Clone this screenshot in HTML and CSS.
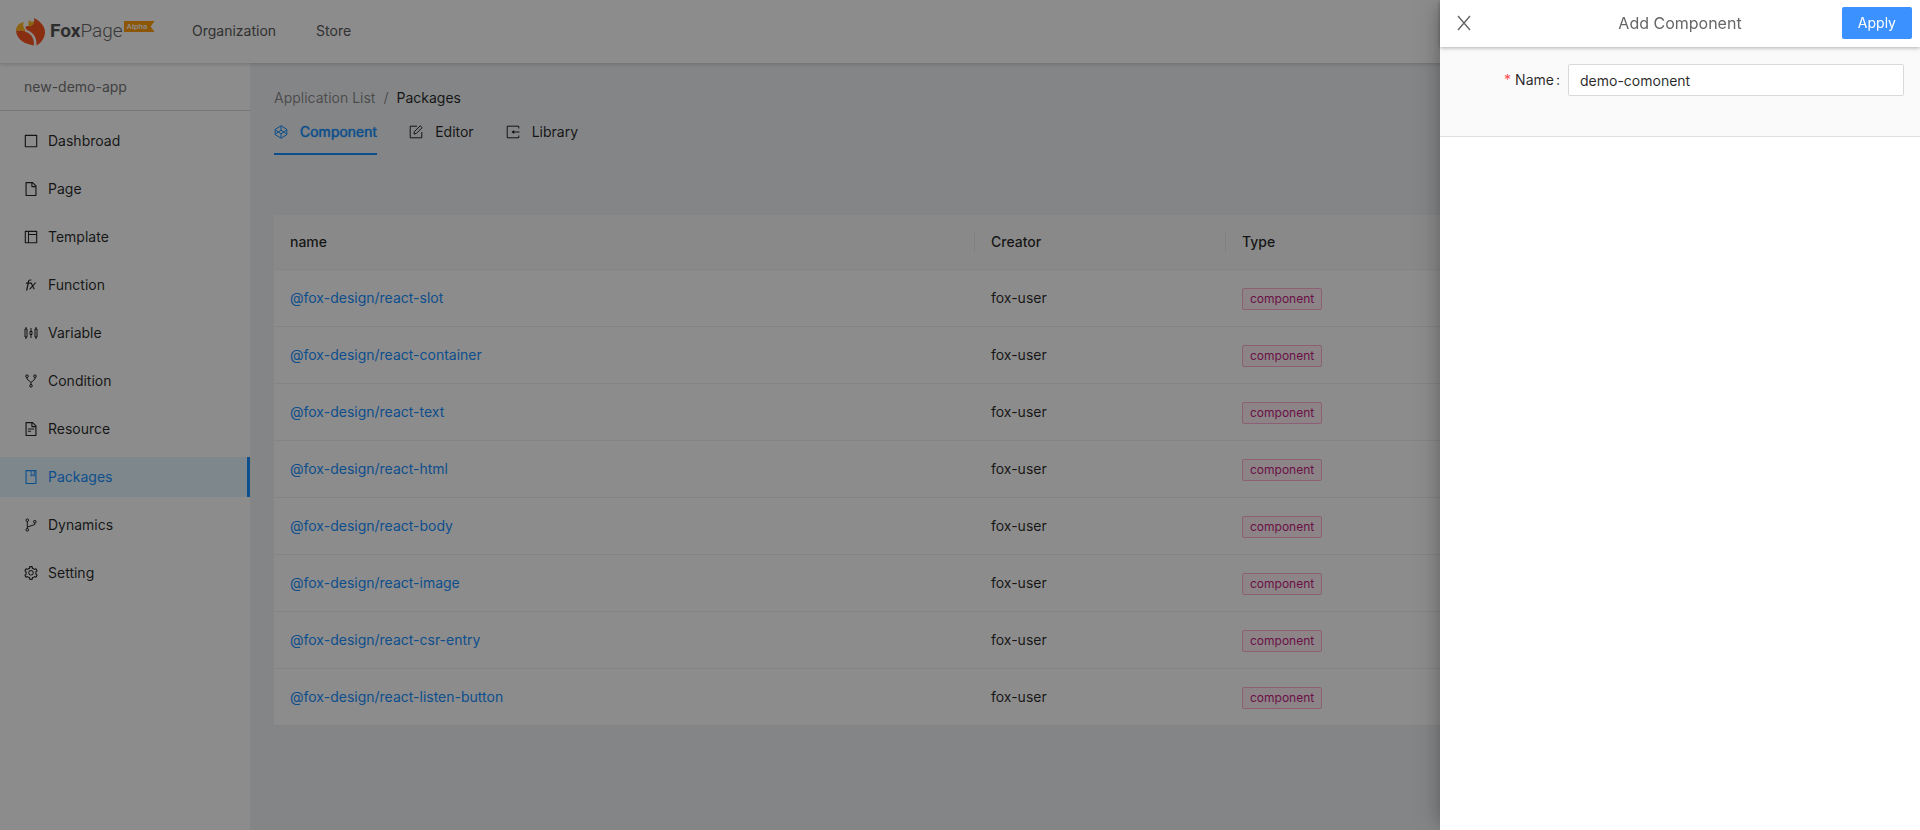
FILE: index.html
```html
<!DOCTYPE html>
<html lang="en">
<head>
<meta charset="utf-8">
<title>FoxPage - Packages</title>
<link rel="stylesheet" href="styles.css">
</head>
<body>
<div class="app">
  <header class="topbar">
    <a class="logo" href="#">
      <svg class="logo-mark" viewBox="0 0 29 28" aria-hidden="true">
        <path fill="#f9551f" d="M0 13c3-1 7-1 10 1 5 2 8 5 8 13.500C9 26 1 22 0 13z"/>
        <path fill="#f9551f" d="M18 0c6 3 11 8 11 14 0 6-4 11-8.500 13.500C21 19 17 15 13 13 9 11 8 8 12 8c4 0 7-3 6-8z"/>
        <path fill="#ffb41f" d="M8 4c-2 3 0 6 2 9.500C6 12 3 12.500 0 13 0 8 3 5 8 4zM13.500 1.500c.5 2.500 2.500 3 4.700 1.500.3 3-1.700 5-5.200 5.500-1-2-.7-5 .5-7z"/>
      </svg>
      <span class="logo-name"><b>Fox</b>Page</span>
      <span class="logo-tag">Alpha</span>
    </a>
    <nav class="topnav">
      <a href="#">Organization</a>
      <a href="#">Store</a>
    </nav>
  </header>
  <div class="body">
    <aside class="sidebar">
      <div class="app-name">new-demo-app</div>
      <nav class="menu">
        <a class="menu-item" href="#"><svg class="icon" viewBox="64 64 896 896"><path d="M880 112H144c-17.700 0-32 14.300-32 32v736c0 17.700 14.300 32 32 32h736c17.700 0 32-14.300 32-32V144c0-17.700-14.300-32-32-32zm-40 728H184V184h656v656z"/></svg>Dashbroad</a>
        <a class="menu-item" href="#"><svg class="icon" viewBox="64 64 896 896"><path d="M854.600 288.600L639.400 73.400c-6-6-14.100-9.400-22.600-9.400H192c-17.700 0-32 14.300-32 32v832c0 17.700 14.300 32 32 32h640c17.700 0 32-14.300 32-32V311.300c0-8.500-3.400-16.700-9.400-22.700zM790.200 326H602V137.800L790.200 326zm1.800 562H232V136h302v216a42 42 0 0042 42h216v494z"/></svg>Page</a>
        <a class="menu-item" href="#"><svg class="icon" viewBox="64 64 896 896"><path d="M880 112H144c-17.700 0-32 14.300-32 32v736c0 17.700 14.300 32 32 32h736c17.700 0 32-14.300 32-32V144c0-17.700-14.300-32-32-32zm-696 72h136v656H184V184zm656 656H384V384h456v456zM384 320V184h456v136H384z"/></svg>Template</a>
        <a class="menu-item" href="#"><svg class="icon" viewBox="64 64 896 896"><path d="M841 370c3-3.300 2.700-8.300-.6-11.300a8.240 8.240 0 00-5.300-2.100h-72.600c-2.400 0-4.600 1-6.100 2.800L633.500 504.600a7.960 7.960 0 01-13.400-1.900l-63.500-141.300a7.900 7.900 0 00-7.300-4.700H380.700l.9-4.700 8-42.300c10.500-55.400 38-81.400 85.800-81.400 18.600 0 35.500 1.700 48.800 4.700l14.100-66.800c-22.600-4.700-35.200-6.100-54.900-6.100-103.300 0-156.400 44.300-175.900 147.300l-9.400 49.400h-97.600c-3.800 0-7.100 2.700-7.800 6.400L181.900 415a8.070 8.070 0 007.800 9.700H284l-89 429.900a8.070 8.070 0 007.800 9.700H269c3.800 0 7.100-2.700 7.800-6.400l89.700-433.100h135.800l68.200 139.100c1.400 2.900 1 6.400-1.200 8.800l-180.600 203c-2.900 3.300-2.600 8.400.7 11.300 1.500 1.300 3.400 2 5.300 2h72.700c2.400 0 4.600-1 6.100-2.800l123.700-146.700c2.800-3.400 7.900-3.800 11.300-1 .9.800 1.600 1.700 2.100 2.800L676.400 784c1.300 2.800 4.100 4.700 7.300 4.700h64.600a8.020 8.020 0 007.200-11.500l-95.200-198.900c-1.400-2.900-.9-6.400 1.300-8.800L841 370z"/></svg>Function</a>
        <a class="menu-item" href="#"><svg class="icon icon-line" viewBox="0 0 14 14"><path d="M1 3h2v8H1zM2 1v2M2 11v2M7 2v3.500M7 8.500V12M6 5.500h2v3H6zM11 3h2v8h-2zM12 1v2M12 11v2"/></svg>Variable</a>
        <a class="menu-item" href="#"><svg class="icon icon-line" viewBox="0 0 14 14"><circle cx="3" cy="2.200" r="1.300"/><circle cx="11" cy="2.200" r="1.300"/><circle cx="7" cy="11.800" r="1.300"/><path d="M3 3.500V5l4 3.500L11 5V3.500M7 8.500v2"/></svg>Condition</a>
        <a class="menu-item" href="#"><svg class="icon" viewBox="64 64 896 896"><path d="M854.600 288.600L639.400 73.400c-6-6-14.100-9.400-22.600-9.400H192c-17.700 0-32 14.300-32 32v832c0 17.700 14.300 32 32 32h640c17.700 0 32-14.300 32-32V311.300c0-8.500-3.400-16.700-9.400-22.700zM790.200 326H602V137.800L790.200 326zm1.800 562H232V136h302v216a42 42 0 0042 42h216v494zM504 618H320c-4.400 0-8 3.600-8 8v48c0 4.400 3.600 8 8 8h184c4.400 0 8-3.600 8-8v-48c0-4.400-3.600-8-8-8zM312 490v48c0 4.400 3.600 8 8 8h384c4.400 0 8-3.600 8-8v-48c0-4.400-3.600-8-8-8H320c-4.400 0-8 3.600-8 8z"/></svg>Resource</a>
        <a class="menu-item menu-item-active" href="#" aria-current="page"><svg class="icon" viewBox="64 64 896 896"><path fill-rule="evenodd" d="M832 64H192c-17.700 0-32 14.300-32 32v832c0 17.700 14.300 32 32 32h640c17.700 0 32-14.300 32-32V96c0-17.700-14.300-32-32-32zM232 136h260v352l130-88 122 88V136h48v752H232zM548 136h140v246l-64-46-76 50z"/></svg>Packages</a>
        <a class="menu-item" href="#"><svg class="icon icon-line" viewBox="0 0 14 14"><circle cx="3.300" cy="2.200" r="1.300"/><circle cx="3.300" cy="11.800" r="1.300"/><circle cx="10.800" cy="3.700" r="1.300"/><path d="M3.300 3.500v7M10.800 5v1.500L3.500 9"/></svg>Dynamics</a>
        <a class="menu-item" href="#"><svg class="icon" viewBox="64 64 896 896"><path d="M924.800 625.700l-65.500-56c3.100-19 4.700-38.400 4.700-57.800s-1.600-38.800-4.700-57.800l65.500-56a32.030 32.030 0 009.300-35.200l-.9-2.600a443.740 443.740 0 00-79.700-137.900l-1.800-2.100a32.120 32.120 0 00-35.100-9.500l-81.300 28.900c-30-24.600-63.500-44-99.700-57.600l-15.700-85a32.050 32.050 0 00-25.800-25.700l-2.700-.5c-52.100-9.400-106.900-9.400-159 0l-2.700.5a32.050 32.050 0 00-25.800 25.700l-15.800 85.400a351.860 351.860 0 00-99 57.400l-81.900-29.100a32 32 0 00-35.100 9.500l-1.800 2.100a446.020 446.020 0 00-79.700 137.900l-.9 2.600c-4.500 12.500-.8 26.500 9.300 35.200l66.300 56.600c-3.100 18.800-4.600 38-4.600 57.100 0 19.200 1.500 38.400 4.600 57.100L99 625.500a32.030 32.030 0 00-9.300 35.200l.9 2.600c18.100 50.400 44.900 96.900 79.700 137.900l1.800 2.100a32.120 32.120 0 0035.100 9.500l81.900-29.100c29.800 24.500 63.100 43.900 99 57.400l15.800 85.400a32.050 32.050 0 0025.800 25.700l2.700.5a449.400 449.400 0 00159 0l2.700-.5a32.050 32.050 0 0025.800-25.700l15.700-85a350 350 0 0099.700-57.600l81.300 28.900a32 32 0 0035.100-9.500l1.800-2.100c34.800-41.100 61.600-87.500 79.700-137.900l.9-2.600c4.500-12.300.8-26.300-9.300-35zM788.300 465.900c2.500 15.100 3.800 30.600 3.800 46.100s-1.300 31-3.800 46.100l-6.600 40.100 74.700 63.900a370.030 370.030 0 01-42.600 73.600L721 702.800l-31.400 25.800c-23.900 19.600-50.500 35-79.300 45.800l-38.100 14.300-17.900 97a377.500 377.500 0 01-85 0l-17.900-97.200-37.800-14.500c-28.500-10.800-55-26.200-78.700-45.700l-31.400-25.900-93.400 33.200c-17-22.900-31.200-47.600-42.600-73.600l75.500-64.500-6.500-40c-2.400-14.900-3.700-30.300-3.700-45.500 0-15.300 1.200-30.600 3.700-45.500l6.500-40-75.500-64.500c11.300-26.100 25.600-50.700 42.600-73.600l93.400 33.200 31.400-25.900c23.700-19.500 50.200-34.900 78.700-45.700l37.900-14.300 17.900-97.200c28.100-3.200 56.800-3.200 85 0l17.900 97 38.100 14.300c28.700 10.800 55.400 26.200 79.300 45.800l31.400 25.800 92.800-32.900c17 22.900 31.200 47.600 42.600 73.600L781.800 426l6.500 39.900zM512 326c-97.200 0-176 78.800-176 176s78.800 176 176 176 176-78.800 176-176-78.800-176-176-176zm79.200 255.200A111.600 111.600 0 01512 614c-29.900 0-58-11.700-79.200-32.800A111.600 111.600 0 01400 502c0-29.900 11.700-58 32.800-79.200C454 401.600 482.100 390 512 390c29.900 0 58 11.600 79.200 32.800A111.600 111.600 0 01624 502c0 29.900-11.700 58-32.800 79.200z"/></svg>Setting</a>
      </nav>
    </aside>
    <main class="content">
      <nav class="breadcrumb" aria-label="Breadcrumb">
        <a href="#">Application List</a><span>/</span><strong>Packages</strong>
      </nav>
      <div class="tabs" role="tablist">
        <button class="tab tab-active" role="tab" aria-selected="true"><svg class="icon icon-line" viewBox="0 0 14 14"><path d="M7 .8l5.800 3.500v5.400L7 13.200 1.200 9.700V4.300zM1.200 4.800L7 8.800l5.800-4M1.200 9.200L7 5.200l5.800 4M7 .8v4.400M7 8.800v4.400"/></svg>Component</button>
        <button class="tab" role="tab"><svg class="icon icon-line" viewBox="0 0 14 14"><path d="M8 1.200H1.200v11.600h11.600V7M5 9l.3-2.300 5.900-5.900 1.900 1.900-5.900 5.900z"/></svg>Editor</button>
        <button class="tab" role="tab"><svg class="icon icon-line" viewBox="0 0 14 14"><path d="M12.800 3.500V1.200H1.200v11.600h11.600v-2.300M6.500 7h7"/><path class="solid" d="M8.200 5v4L5.500 7z"/></svg>Library</button>
      </div>
      <table class="packages">
        <colgroup><col><col class="col-creator"><col class="col-type"></colgroup>
        <thead><tr><th>name</th><th>Creator</th><th>Type</th></tr></thead>
        <tbody>
          <tr><td><a href="#">@fox-design/react-slot</a></td><td>fox-user</td><td><span class="tag">component</span></td></tr>
          <tr><td><a href="#">@fox-design/react-container</a></td><td>fox-user</td><td><span class="tag">component</span></td></tr>
          <tr><td><a href="#">@fox-design/react-text</a></td><td>fox-user</td><td><span class="tag">component</span></td></tr>
          <tr><td><a href="#">@fox-design/react-html</a></td><td>fox-user</td><td><span class="tag">component</span></td></tr>
          <tr><td><a href="#">@fox-design/react-body</a></td><td>fox-user</td><td><span class="tag">component</span></td></tr>
          <tr><td><a href="#">@fox-design/react-image</a></td><td>fox-user</td><td><span class="tag">component</span></td></tr>
          <tr><td><a href="#">@fox-design/react-csr-entry</a></td><td>fox-user</td><td><span class="tag">component</span></td></tr>
          <tr><td><a href="#">@fox-design/react-listen-button</a></td><td>fox-user</td><td><span class="tag">component</span></td></tr>
        </tbody>
      </table>
    </main>
  </div>
</div>
<div class="mask"></div>
<section class="drawer" role="dialog" aria-labelledby="drawer-title">
  <header class="drawer-head">
    <button class="close" aria-label="Close"><svg viewBox="0 0 16 16"><path d="M2 1l12 14M14 1L2 15"/></svg></button>
    <h2 class="drawer-title" id="drawer-title">Add Component</h2>
    <button class="apply" type="submit" form="component-form">Apply</button>
  </header>
  <form class="form" id="component-form">
    <label class="label" for="name"><span class="required">*</span>Name<span class="colon">:</span></label>
    <input class="input" id="name" type="text" value="demo-comonent">
  </form>
</section>
</body>
</html>
```
FILE: styles.css
```css
* { box-sizing: border-box; }

body {
  margin: 0;
  font: 14px/22px Inter, "Liberation Sans", sans-serif;
  color: rgba(0, 0, 0, 0.85);
}

a { color: inherit; text-decoration: none; }
button { font: inherit; color: inherit; background: none; border: 0; padding: 0; cursor: pointer; }

.app { min-height: 100vh; display: flex; flex-direction: column; background: #f0f2f5; }

.topbar {
  height: 63px;
  display: flex;
  align-items: center;
  padding: 0 0 1px 16px;
  background: #fff;
  box-shadow: 0 1px 4px rgba(0, 21, 41, 0.2);
  z-index: 1;
}
.logo { width: 176px; display: flex; align-items: center; }
.logo-mark { width: 29px; height: 28px; margin: 2px 5px 0 0; }
.logo-name { font: 300 19px/24px Roboto, sans-serif; color: #666; }
.logo-name b { font-weight: 700; color: #555; }
.logo-tag {
  align-self: flex-start;
  width: 31px;
  margin: 5px 0 0 1px;
  padding-left: 3px;
  font: 500 8px/11px Roboto, sans-serif;
  color: #fff;
  background: #ff9d0a;
  clip-path: polygon(0 0, 100% 0, 87% 50%, 100% 100%, 0 100%);
}
.topnav { display: flex; gap: 40px; color: #595959; }

.body { flex: 1; display: flex; }
.sidebar { width: 250px; flex: none; background: #fff; }
.app-name { padding: 13px 24px 12px; color: #777; border-bottom: 1px solid #d9d9d9; }
.menu { display: flex; flex-direction: column; gap: 8px; padding-top: 10px; }
.menu-item { display: flex; align-items: center; gap: 10px; height: 40px; padding-left: 24px; }
.menu-item-active { color: #1890ff; background: #e6f7ff; border-right: 3px solid #1890ff; }

.icon { width: 14px; height: 14px; flex: none; fill: currentColor; }
.icon-line { fill: none; stroke: currentColor; stroke-width: 1; }
.solid { fill: currentColor; stroke: none; }

.content { flex: 1; padding: 24px; }
.breadcrumb { display: flex; gap: 8px; color: rgba(0, 0, 0, 0.45); }
.breadcrumb strong { font-weight: 400; color: rgba(0, 0, 0, 0.85); }
.tabs { display: flex; gap: 32px; margin-bottom: 60px; }
.tab { display: flex; align-items: center; gap: 12px; height: 46px; padding-top: 2px; border-bottom: 2px solid transparent; }
.tab-active { color: #1890ff; border-color: #1890ff; text-shadow: 0 0 1px currentColor; }

.packages { width: 100%; table-layout: fixed; border-collapse: separate; border-spacing: 0; background: #fff; }
.col-creator { width: 251px; }
.col-type { width: 670px; }
.packages th { position: relative; padding: 16px; font-weight: 500; text-align: left; background: #fafafa; border-bottom: 1px solid #f0f0f0; }
.packages th:not(:last-child)::after { content: ""; position: absolute; right: 0; top: 16px; bottom: 16px; width: 1px; background: #ebebeb; }
.packages td { height: 57px; padding: 0 16px; border-bottom: 1px solid #f0f0f0; }
.packages a { color: #1890ff; }
.tag {
  display: inline-block;
  padding: 0 7px;
  font-size: 12px;
  line-height: 20px;
  color: #c41d7f;
  background: #fff0f6;
  border: 1px solid #ffadd2;
  border-radius: 2px;
}

.mask { position: fixed; inset: 0; background: rgba(0, 0, 0, 0.45); z-index: 2; }

.drawer {
  position: fixed;
  top: 0;
  right: 0;
  bottom: 0;
  width: 480px;
  background: #fff;
  box-shadow: -6px 0 16px -8px rgba(0, 0, 0, 0.3), -9px 0 28px rgba(0, 0, 0, 0.1);
  z-index: 3;
}
.drawer-head {
  position: relative;
  display: grid;
  grid-template-columns: 1fr auto 1fr;
  align-items: center;
  height: 47px;
  padding: 0 8px 1px;
  box-shadow: 0 1px 4px rgba(0, 0, 0, 0.3);
}
.close { width: 16px; height: 16px; margin-left: 8px; }
.close svg { display: block; width: 16px; height: 16px; fill: none; stroke: #666; stroke-width: 1.4; }
.drawer-title { margin: 0; font-size: 16px; line-height: 22px; font-weight: 400; color: #666; }
.apply { justify-self: end; height: 32px; padding: 0 16px; color: #fff; background: #3b91ff; border-radius: 2px; }
.form { display: flex; align-items: center; padding: 17px 16px 40px 0; background: #fafafa; border-bottom: 1px solid #e0e0e0; }
.label { width: 128px; padding-right: 8px; text-align: right; }
.required { margin-right: 4px; color: #ff4d4f; }
.colon { margin-left: 2px; }
.input { flex: 1; height: 32px; padding: 4px 11px; font: inherit; color: inherit; background: #fff; border: 1px solid #d9d9d9; border-radius: 2px; outline: 0; }
```
